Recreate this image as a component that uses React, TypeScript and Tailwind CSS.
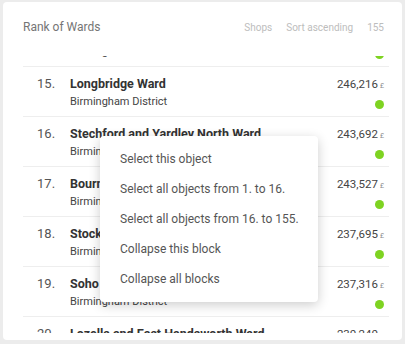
import React from "react";

interface Ward {
  rank: number;
  name: string;
  district: string;
  value: string;
}

const wards: Ward[] = [
  { rank: 14, name: "Kings Norton South Ward", district: "Birmingham District", value: "247,010" },
  { rank: 15, name: "Longbridge Ward", district: "Birmingham District", value: "246,216" },
  { rank: 16, name: "Stechford and Yardley North Ward", district: "Birmingham District", value: "243,692" },
  { rank: 17, name: "Bournville Ward", district: "Birmingham District", value: "243,527" },
  { rank: 18, name: "Stockland Green Ward", district: "Birmingham District", value: "237,695" },
  { rank: 19, name: "Soho Ward", district: "Birmingham District", value: "237,316" },
  { rank: 20, name: "Lozells and East Handsworth Ward", district: "Birmingham District", value: "230,240" },
];

const menuItems = [
  "Select this object",
  "Select all objects from 1. to 16.",
  "Select all objects from 16. to 155.",
  "Collapse this block",
  "Collapse all blocks",
];

export default function App() {
  return (
    <div
      className="w-[405px] h-[344px] bg-[#ececec] pt-[2px] px-[3px] pb-[4px]"
      style={{ fontFamily: "Roboto, 'Liberation Sans', sans-serif" }}
    >
      <div className="relative h-full bg-white rounded-[4px] flex flex-col">
        <div className="flex items-center h-[54px] pb-[4px] pl-[20px] pr-[18px] whitespace-nowrap">
          <span className="text-[12px] text-[#757575]">Rank of Wards</span>
          <div className="ml-auto flex gap-[14px] text-[10px] text-[#bdbdbd]">
            <span>Shops</span>
            <span>Sort ascending</span>
            <span>155</span>
          </div>
        </div>
        <div className="h-[277px] overflow-hidden ml-[20px] mr-[13px]">
          <div className="mt-[-39px]">
            {wards.map((w) => (
              <div
                key={w.rank}
                className="h-[50px] border-b border-[#eeeeee] flex pt-[8px] whitespace-nowrap"
              >
                <div className="w-[47px] pl-[14px] text-[13px] text-[#555] leading-[18px]">
                  {w.rank}.
                </div>
                <div className="flex-1 flex flex-col">
                  <span className="text-[12.5px] font-bold text-[#333] leading-[18px]">
                    {w.name}
                  </span>
                  <span className="text-[11px] text-[#444] leading-[18px]">
                    {w.district}
                  </span>
                </div>
                <div className="flex flex-col items-end pr-[5px]">
                  <span className="text-[11.5px] text-[#444] leading-[18px]">
                    {w.value}
                    <span className="text-[7px] text-[#888] ml-[2px]">£</span>
                  </span>
                  <span className="mt-[5px] w-[9px] h-[9px] rounded-full bg-[#7ed321]" />
                </div>
              </div>
            ))}
          </div>
        </div>
        <div className="absolute left-[97px] top-[134px] w-[218px] bg-white rounded-[4px] py-[8px] shadow-[0_3px_12px_rgba(0,0,0,0.2)]">
          {menuItems.map((m) => (
            <div
              key={m}
              className="h-[30px] flex items-center px-[20px] text-[12px] text-[#555] whitespace-nowrap"
            >
              {m}
            </div>
          ))}
        </div>
      </div>
    </div>
  );
}
